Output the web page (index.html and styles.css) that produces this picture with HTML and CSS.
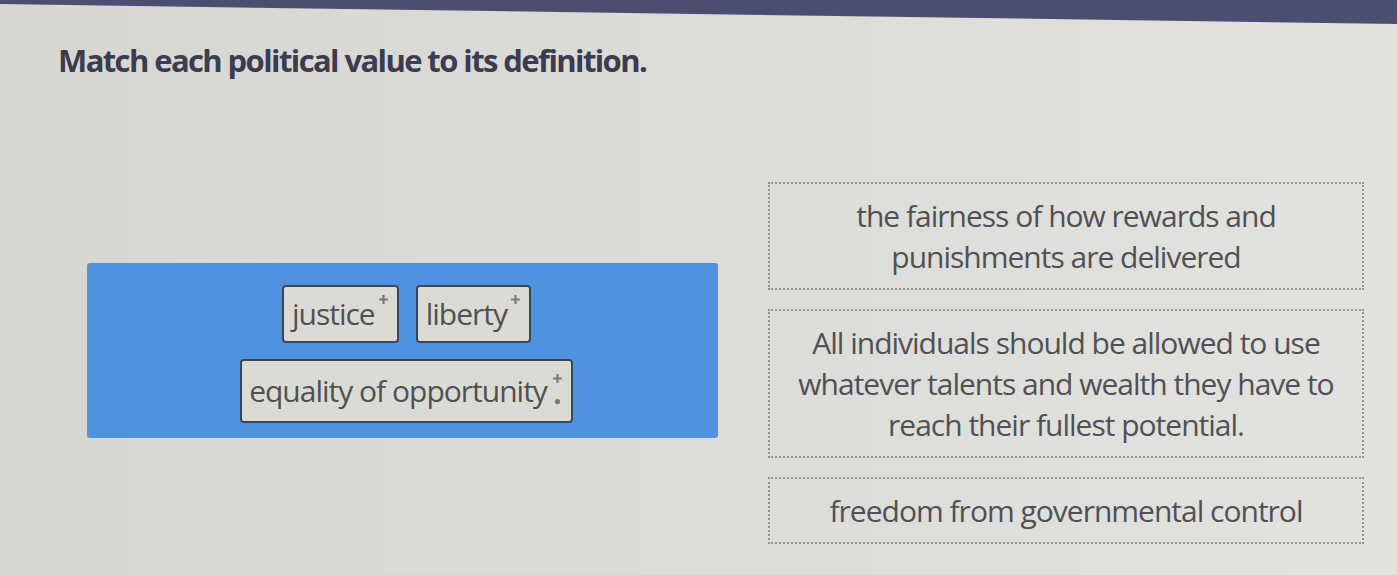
FILE: index.html
```html
<!doctype html>
<html lang="en">
  <head>
    <meta charset="UTF-8" />
    <meta name="viewport" content="width=device-width, initial-scale=1.0" />
    <title>Match</title>
    <link rel="stylesheet" href="styles.css">
  </head>
  <body>
    <div class="topbar"></div>
    <h1 class="prompt">Match each political value to its definition.</h1>

    <div class="match">
      <div class="bank">
        <div class="row">
          <div class="chip">justice
            <svg class="grip" viewBox="0 0 10 10"><path d="M5 1v8M1 5h8" /></svg>
          </div>
          <div class="chip">liberty
            <svg class="grip" viewBox="0 0 10 10"><path d="M5 1v8M1 5h8" /></svg>
          </div>
        </div>
        <div class="row">
          <div class="chip chip-wide">equality of opportunity
            <svg class="grip grip-dot" viewBox="0 0 10 30"><path d="M5 1v8M1 5h8" /><circle cx="5" cy="26" r="1.4" /></svg>
          </div>
        </div>
      </div>

      <div class="targets">
        <div class="slot">the fairness of how rewards and<br />punishments are delivered</div>
        <div class="slot">All individuals should be allowed to use<br />whatever talents and wealth they have to<br />reach their fullest potential.</div>
        <div class="slot">freedom from governmental control</div>
      </div>
    </div>
  </body>
</html>
```

FILE: styles.css
```css
* {
  padding: 0;
  margin: 0;
  box-sizing: border-box;
}
body {
  background: linear-gradient(90deg, #d6d6d3 0%, #dcdcd8 55%, #e2e2de 100%);
  min-height: 575px;
  font-family: "Open Sans", "Liberation Sans", sans-serif;
  color: #505056;
}
/* header strip, slightly skewed like the app chrome */
.topbar {
  height: 24px;
  background-color: #4b4e70;
  clip-path: polygon(0 0, 100% 0, 100% 24px, 0 4px);
}
.prompt {
  font-size: 31px;
  font-weight: 700;
  letter-spacing: -1.6px;
  color: #3c3c4e;
  padding: 16px 0 0 58px;
  line-height: 40px;
}
.match {
  display: flex;
  align-items: flex-start;
  padding: 102px 0 0 87px;
}
.bank {
  width: 631px;
  height: 175px;
  margin-top: 81px;
  background-color: #4f93e0;
  border-radius: 3px;
  display: flex;
  flex-direction: column;
  align-items: center;
  justify-content: center;
  gap: 16px;
  padding: 6px 0 0 8px;
}
.row {
  display: flex;
  gap: 17px;
}
.chip {
  position: relative;
  background-color: #dbdbd6;
  border: 2px solid #3b4756;
  border-radius: 4px;
  font-size: 30px;
  letter-spacing: -1px;
  line-height: 36px;
  padding: 9px 22px 9px 8px;
  color: #505052;
}
.chip-wide {
  padding: 12px 24px 12px 7px;
}
.grip {
  position: absolute;
  top: 7px;
  right: 8px;
  width: 11px;
  height: 11px;
  stroke: #7a7a7c;
  stroke-width: 2;
  fill: #7a7a7c;
}
.grip-dot {
  top: 12px;
  height: 33px;
}
.targets {
  margin-left: 50px;
  width: 596px;
  display: flex;
  flex-direction: column;
  gap: 19px;
}
.slot {
  border: 2px dotted #929297;
  text-align: center;
  font-size: 30px;
  letter-spacing: -1px;
  line-height: 41px;
  padding: 11px 10px;
  color: #505056;
}
```
